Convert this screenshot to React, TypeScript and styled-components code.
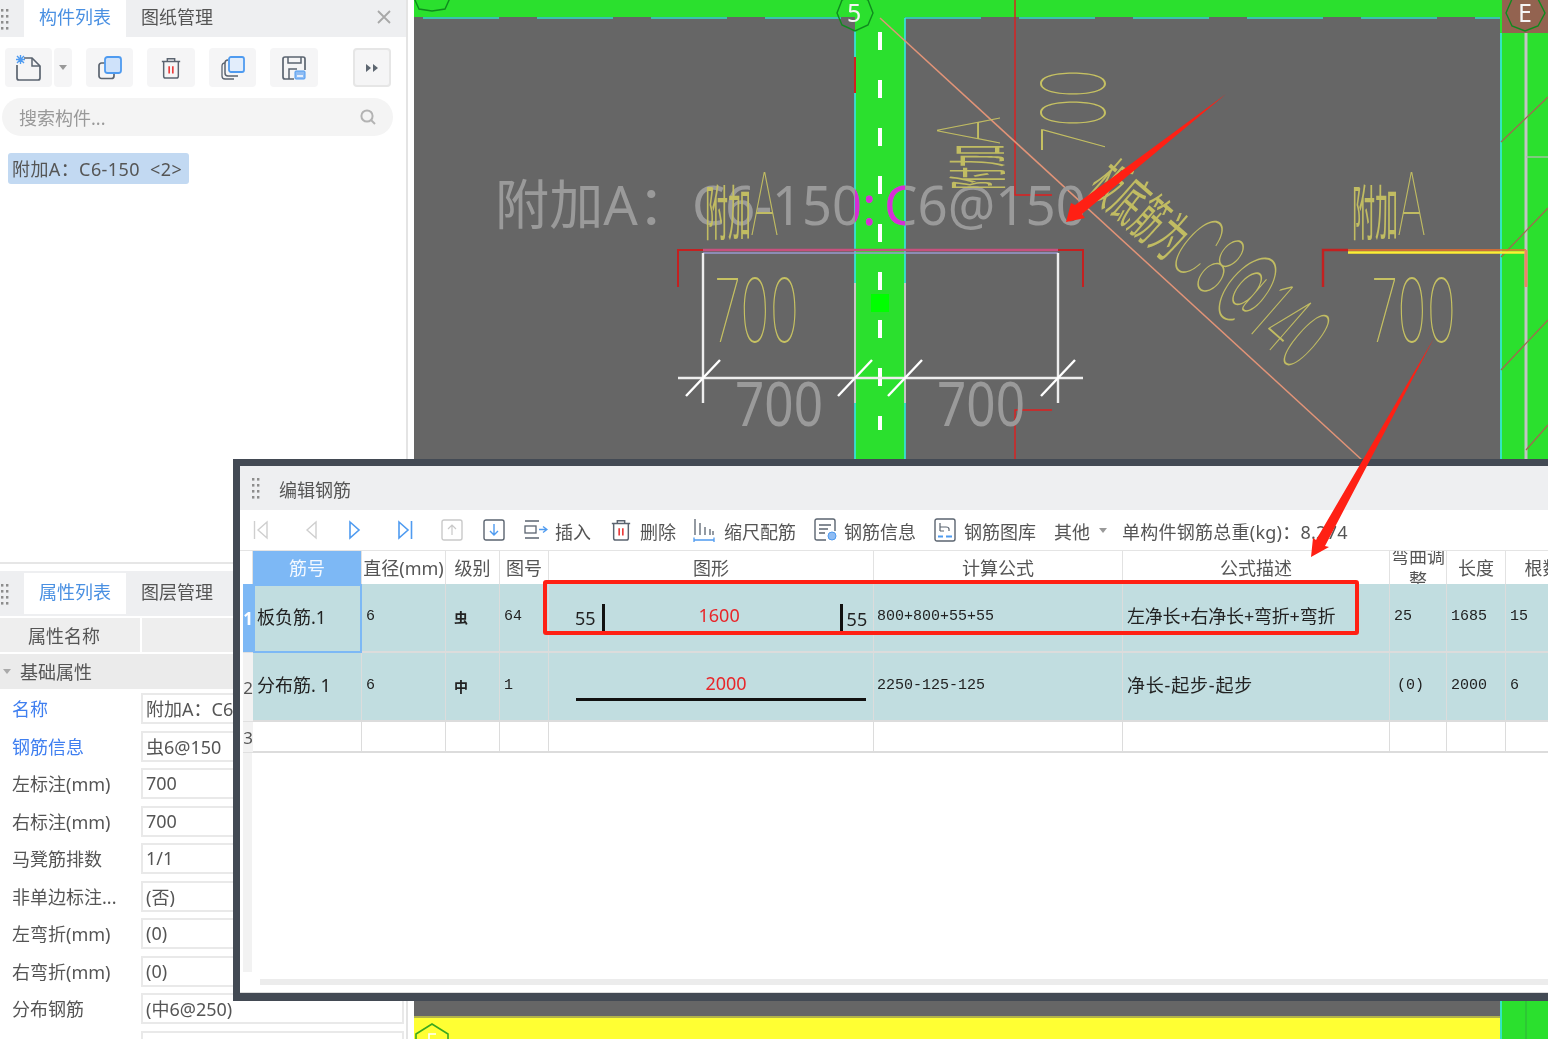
import React from "react";
import styled, { createGlobalStyle } from "styled-components";

const SANS = '"Noto Sans", "Noto Sans CJK SC", "Liberation Sans", sans-serif';
const MONO = '"Liberation Mono", "Noto Sans CJK SC", monospace';
const BLUE = "#4a90e2";
const INK = "#5b6470";
const ICON_BLUE = "#4f9bf0";

const Global = createGlobalStyle`
  html, body { margin: 0; padding: 0; background: #fff; overflow: hidden; }
  * { box-sizing: border-box; }
`;

const Page = styled.div`
  position: relative;
  display: flex;
  width: 1548px;
  height: 1039px;
  overflow: hidden;
  font-family: ${SANS};
  font-size: 18px;
  color: #555;
  filter: blur(0.45px);
`;

/* ---------- sidebar ---------- */
const Sidebar = styled.aside`
  flex: 0 0 414px;
  height: 1039px;
  display: flex;
  flex-direction: column;
  background: #fff;
  padding-right: 6px;
`;
const SideInner = styled.div`
  flex: 1;
  display: flex;
  flex-direction: column;
  border-right: 2px solid #e4e4e4;
  overflow: hidden;
`;
const ListPanel = styled.section`
  flex: 0 0 564px;
  border-bottom: 2px solid #e6e6e6;
`;
const TabBar = styled.div<{ $height: number; $pad?: number }>`
  display: flex;
  align-items: stretch;
  height: ${(p) => p.$height}px;
  padding-top: ${(p) => p.$pad ?? 0}px;
  padding-bottom: ${(p) => p.$pad ?? 0}px;
  background: #eeeff1;
`;
const Grip = styled.span<{ $w?: number }>`
  flex: 0 0 ${(p) => p.$w ?? 24}px;
  display: flex;
  align-items: center;
`;
const Tab = styled.div<{ $active?: boolean }>`
  flex: 0 0 102px;
  display: flex;
  align-items: center;
  justify-content: center;
  padding-bottom: 4px;
  line-height: 1;
  background: ${(p) => (p.$active ? "#fff" : "transparent")};
  color: ${(p) => (p.$active ? BLUE : "#555")};
`;
const CloseMark = styled.span`
  margin-left: auto;
  margin-right: 15px;
  padding-bottom: 3px;
  display: flex;
  align-items: center;
`;
const IconBar = styled.div`
  display: flex;
  align-items: center;
  height: 39px;
  margin: 11px 0 11px 5px;
`;
const IconBtn = styled.button<{ $w?: number; $gap?: number; $outlined?: boolean }>`
  flex: 0 0 ${(p) => p.$w ?? 47}px;
  height: 39px;
  margin-right: ${(p) => p.$gap ?? 14}px;
  padding: 0;
  display: flex;
  align-items: center;
  justify-content: center;
  background: #f5f5f6;
  border: ${(p) => (p.$outlined ? "2px solid #e6e6e6" : "none")};
  border-radius: 4px;
`;
const SearchBox = styled.div`
  display: flex;
  align-items: center;
  justify-content: space-between;
  height: 38px;
  margin: 0 13px 0 2px;
  padding: 0 17px;
  border-radius: 19px;
  background: #f4f4f4;
  color: #999;
  font-size: 18px;
`;
const ListItem = styled.div`
  display: inline-flex;
  align-items: center;
  height: 31px;
  margin: 17px 0 0 8px;
  padding: 0 7px 2px 4px;
  border-radius: 3px;
  background: #c2d9f2;
  font-size: 18px;
  letter-spacing: 0.4px;
  color: #555;
  white-space: pre;
`;
const PropPanel = styled.section`
  flex: 1;
  padding-top: 7px;
  overflow: hidden;
`;
const PropHead = styled.div`
  display: grid;
  grid-template-columns: 140px 1fr;
  gap: 2px;
  height: 34px;
  margin-top: 2px;
`;
const PropHeadCell = styled.div`
  display: flex;
  align-items: center;
  padding-left: 28px;
  padding-bottom: 1px;
  background: #eeeeee;
`;
const GroupRow = styled.div`
  display: flex;
  align-items: center;
  gap: 9px;
  height: 35px;
  margin: 2px 0 1px;
  padding: 0 0 1px 3px;
  background: #ebebeb;
`;
const PropRow = styled.div`
  display: grid;
  grid-template-columns: 141px 263px;
  align-items: center;
  height: 37.5px;
`;
const PropName = styled.div<{ $link?: boolean }>`
  padding-left: 12px;
  padding-bottom: 1px;
  color: ${(p) => (p.$link ? "#3f7ff0" : "#555")};
  white-space: nowrap;
`;
const PropValue = styled.div`
  height: 31px;
  display: flex;
  align-items: center;
  padding: 0 0 1px 3px;
  border: 2px solid #e9e9e9;
  white-space: nowrap;
`;

/* ---------- canvas ---------- */
const Canvas = styled.main`
  flex: 0 0 1134px;
  height: 1039px;
  background: #666666;
`;
const Drawing = styled.svg`
  display: block;
`;
const CadText = styled.text<{ $size: number; $color: string; $thin?: boolean }>`
  font-family: ${(p) => (p.$thin ? 'Inter, "Noto Sans CJK SC", sans-serif' : SANS)};
  font-size: ${(p) => p.$size}px;
  font-weight: ${(p) => (p.$thin ? 100 : 400)};
  fill: ${(p) => p.$color};
`;

/* ---------- dialog ---------- */
const Dialog = styled.section`
  position: absolute;
  left: 233px;
  top: 459px;
  width: 1330px;
  height: 542px;
  display: flex;
  flex-direction: column;
  border: 7px solid #434a54;
  border-bottom-width: 8px;
  background: #fff;
  z-index: 2;
`;
const DialogTitle = styled.header`
  flex: 0 0 44px;
  display: flex;
  align-items: center;
  padding-left: 11px;
  background: #eeeff1;
`;
const DialogTitleText = styled.span`
  margin-left: 19px;
  padding-top: 3px;
  line-height: 1;
`;
const RebarBar = styled.div`
  flex: 0 0 41px;
  display: flex;
  align-items: center;
  border-bottom: 1px solid #e4e4e4;
  white-space: nowrap;
`;
const BarSlot = styled.span<{ $x: number; $w: number }>`
  flex: 0 0 ${(p) => p.$w}px;
  margin-left: ${(p) => p.$x}px;
  display: flex;
  align-items: center;
  justify-content: center;
`;
const BarLabel = styled.span<{ $x: number; $track?: number }>`
  margin-left: ${(p) => p.$x}px;
  padding-top: 3px;
  line-height: 1;
  letter-spacing: ${(p) => p.$track ?? 0}px;
`;
const GridTable = styled.div`
  display: grid;
  grid-template-columns: 10px 109px 84px 54px 49px 325px 249px 267px 57px 59px 74px;
  grid-template-rows: 33px 69px 69px 31px;
  margin-left: 3px;
`;
const Head = styled.div<{ $selected?: boolean; $wrap?: boolean }>`
  display: flex;
  align-items: center;
  justify-content: center;
  overflow: hidden;
  line-height: ${(p) => (p.$wrap ? "24px" : "1")};
  text-align: center;
  background: ${(p) => (p.$selected ? "#7db8f5" : "#fff")};
  color: ${(p) => (p.$selected ? "#f4f9ff" : "#555")};
  border-right: 1px solid #e2e2e2;
`;
const Gutter = styled.div<{ $active?: boolean; $plain?: boolean }>`
  display: flex;
  align-items: center;
  justify-content: center;
  overflow: hidden;
  font-size: 17px;
  font-weight: ${(p) => (p.$active ? 700 : 400)};
  background: ${(p) => (p.$active ? "#7db8f5" : p.$plain ? "#fff" : "#f2f2f2")};
  color: ${(p) => (p.$active ? "#fff" : "#555")};
  border-bottom: 1px solid #e0e0e0;
`;
const Cell = styled.div<{ $filled?: boolean; $selected?: boolean; $pad?: number; $cjk?: boolean; $track?: number }>`
  display: flex;
  align-items: center;
  padding-left: ${(p) => p.$pad ?? 4}px;
  padding-bottom: ${(p) => (p.$cjk ? 5 : 2)}px;
  overflow: hidden;
  white-space: pre;
  color: #222;
  background: ${(p) => (p.$filled ? "#c1dde0" : "#fff")};
  font-family: ${(p) => (p.$cjk ? SANS : MONO)};
  font-size: ${(p) => (p.$cjk ? 18 : 15)}px;
  letter-spacing: ${(p) => p.$track ?? 0}px;
  border-right: 1px solid #dcdcdc;
  border-bottom: 2px solid #dcdcdc;
  ${(p) => p.$selected && "border: 2px solid #7db8f5;"}
`;
const GradeCell = styled(Cell)`
  padding-left: 8px;
  padding-bottom: 2px;
  font-size: 14px;
  font-weight: 700;
`;
const ShapeCell = styled(Cell)`
  padding-bottom: 0;
  font-family: ${SANS};
  font-size: 18px;
`;
const DimLabel = styled.span<{ $shift?: number }>`
  font-size: 18px;
  line-height: 1;
  margin-top: ${(p) => p.$shift ?? 0}px;
`;
const BentBar = styled.div`
  flex: 0 0 241px;
  height: 28px;
  margin: 0 4px 0 6px;
  display: flex;
  align-items: center;
  justify-content: center;
  border-left: 3px solid #111;
  border-right: 3px solid #111;
  border-bottom: 1px solid #333;
  color: #e8262a;
  padding-bottom: 5px;
  padding-right: 6px;
`;
const StraightBar = styled.div`
  flex: 0 0 290px;
  height: 30px;
  margin-bottom: 2px;
  padding-left: 10px;
  display: flex;
  align-items: flex-start;
  justify-content: center;
  line-height: 25px;
  border-bottom: 3px solid #111;
  color: #e8262a;
`;
const GutterFill = styled.div`
  width: 9px;
  height: 220px;
  margin-left: 3px;
  background: #f2f2f2;
`;
const HScroll = styled.div`
  height: 6px;
  margin: 7px 0 0 20px;
  background: #ececec;
`;
const DialogFoot = styled.div`
  flex: 1;
  margin-top: 7px;
  border-bottom: 1px solid #dcdcdc;
`;

/* ---------- annotation overlay ---------- */
const RedBox = styled.div`
  position: absolute;
  left: 543px;
  top: 580px;
  width: 816px;
  height: 55px;
  border: 4px solid #ff2014;
  border-radius: 3px;
  z-index: 3;
`;
const Annotations = styled.svg`
  position: absolute;
  left: 0;
  top: 0;
  z-index: 4;
  pointer-events: none;
`;

/* ---------- icons ---------- */
const Dots = () => (
  <svg width="9" height="24" viewBox="0 0 9 24">
    {[2, 8, 14, 20].map((y) =>
      [1, 6].map((dx) => <rect key={`${y}${dx}`} x={dx} y={y} width="2.4" height="2.6" fill="#8d8d8d" />)
    )}
  </svg>
);
const CloseIcon = () => (
  <svg width="14" height="14" viewBox="0 0 14 14">
    <path d="M1 1 L13 13 M13 1 L1 13" stroke="#a8a8a8" strokeWidth="1.8" fill="none" />
  </svg>
);
const Caret = ({ color = "#999" }: { color?: string }) => (
  <svg width="8" height="5" viewBox="0 0 8 5">
    <path d="M0 0 H8 L4 5 Z" fill={color} />
  </svg>
);
const NewDocIcon = () => (
  <svg width="26" height="26" viewBox="0 0 26 26">
    <path d="M8 3 H16 L24 11 V23 Q24 25 22 25 H3 Q1 25 1 23 V10" fill="none" stroke={INK} strokeWidth="1.7" />
    <path d="M16 3 V11 H24" fill="none" stroke={INK} strokeWidth="1.5" />
    <path d="M1 1 L8 8 M8 1 L1 8 M4.5 0 V9 M0 4.5 H9" stroke={ICON_BLUE} strokeWidth="1.4" />
  </svg>
);
const CopyIcon = () => (
  <svg width="24" height="24" viewBox="0 0 24 24">
    <rect x="1" y="7" width="15" height="15.5" rx="2.5" fill="none" stroke={INK} strokeWidth="1.7" />
    <rect x="7" y="1" width="16" height="16" rx="2.5" fill="#cfe2fa" stroke={ICON_BLUE} strokeWidth="1.8" />
  </svg>
);
const TrashIcon = ({ size = 22 }: { size?: number }) => (
  <svg width={size} height={size} viewBox="0 0 22 24">
    <path d="M1 5 H21 M7 5 V2 H15 V5 M3 5 V21 Q3 23 5 23 H17 Q19 23 19 21 V5" fill="none" stroke={INK} strokeWidth="1.6" />
    <path d="M9 10 V18 M13 10 V18" stroke="#ea3b3b" strokeWidth="1.8" />
  </svg>
);
const MultiCopyIcon = () => (
  <svg width="24" height="24" viewBox="0 0 24 24">
    <path d="M4 7 Q1 7 1 10 V20 Q1 23 4 23 H13" fill="none" stroke={INK} strokeWidth="1.3" />
    <path d="M7 4 Q4 4 4 7 V17 Q4 20 7 20 H17" fill="none" stroke={INK} strokeWidth="1.5" />
    <rect x="8" y="1" width="15" height="15" rx="2" fill="#e2edfb" stroke={ICON_BLUE} strokeWidth="1.8" />
  </svg>
);
const SaveIcon = () => (
  <svg width="24" height="24" viewBox="0 0 24 24">
    <path d="M12 23 H3 Q1 23 1 21 V3 Q1 1 3 1 H21 Q23 1 23 3 V14" fill="none" stroke={INK} strokeWidth="1.7" />
    <path d="M7 23 V13 H15 M6 1 V7 H19 V1" fill="none" stroke={INK} strokeWidth="1.5" />
    <rect x="13" y="15" width="10" height="8" rx="1" fill="#8fbcf3" stroke={ICON_BLUE} />
    <path d="M15 20 H21" stroke="#fff" strokeWidth="1.5" />
  </svg>
);
const ForwardIcon = () => (
  <svg width="12" height="8" viewBox="0 0 12 8">
    <path d="M0 0 L5 4 L0 8 Z M7 0 L12 4 L7 8 Z" fill="#5d6670" />
  </svg>
);
const SearchIcon = () => (
  <svg width="16" height="16" viewBox="0 0 16 16">
    <circle cx="7" cy="7" r="5.6" fill="none" stroke="#b3b3b3" strokeWidth="2" />
    <path d="M11 11 L15 15" stroke="#b3b3b3" strokeWidth="2" />
  </svg>
);
const StepIcon = ({ dir, bar, color }: { dir: "l" | "r"; bar?: boolean; color: string }) => (
  <svg width="16" height="20" viewBox="0 0 16 20">
    {dir === "l" ? (
      <>
        {bar && <path d="M1.5 1 V19" stroke={color} strokeWidth="1.4" />}
        <path d="M14 2 L5 10 L14 18 Z" fill="none" stroke={color} strokeWidth="1.4" />
      </>
    ) : (
      <>
        <path d="M2 2 L11 10 L2 18 Z" fill="none" stroke={color} strokeWidth="1.6" />
        {bar && <path d="M14.5 1 V19" stroke={color} strokeWidth="1.6" />}
      </>
    )}
  </svg>
);
const BoxArrow = ({ up }: { up?: boolean }) => (
  <svg width="22" height="22" viewBox="0 0 22 22">
    <rect x="1" y="1" width="20" height="20" rx="2" fill="none" stroke={up ? "#c9c9c9" : INK} strokeWidth="1.4" />
    {up ? (
      <path d="M11 16 V6 M7 10 L11 6 L15 10" fill="none" stroke="#c9c9c9" strokeWidth="1.2" />
    ) : (
      <path d="M11 5 V16 M7 12 L11 16 L15 12" fill="none" stroke={ICON_BLUE} strokeWidth="1.4" />
    )}
  </svg>
);
const InsertIcon = () => (
  <svg width="24" height="20" viewBox="0 0 24 20">
    <path d="M1 1 H15 M1 18 H15" stroke={INK} strokeWidth="1.4" />
    <rect x="1" y="6" width="11" height="7" fill="none" stroke={INK} strokeWidth="1.3" />
    <path d="M15 9.5 H22 M19 6.5 L23 9.5 L19 12.5" fill="none" stroke={ICON_BLUE} strokeWidth="1.4" />
  </svg>
);
const ScaleIcon = () => (
  <svg width="22" height="24" viewBox="0 0 22 24">
    <path d="M2 1 V17 M7 5 V17 M12 9 V17 M17 11 V17 M20 13 V17" stroke={INK} strokeWidth="1.3" />
    <path d="M1 22 H21 M1 19.5 V24 M21 19.5 V24" stroke={ICON_BLUE} strokeWidth="1.3" fill="none" />
  </svg>
);
const InfoIcon = () => (
  <svg width="24" height="24" viewBox="0 0 24 24">
    <path d="M12 22 H3 Q1 22 1 20 V3 Q1 1 3 1 H19 Q21 1 21 3 V13" fill="none" stroke={INK} strokeWidth="1.4" />
    <path d="M5 7 H17 M5 11 H14 M5 15 H11" stroke={INK} strokeWidth="1.3" />
    <circle cx="18" cy="18" r="4" fill="#8fbcf3" stroke={ICON_BLUE} />
  </svg>
);
const LibraryIcon = () => (
  <svg width="22" height="24" viewBox="0 0 22 24">
    <rect x="1" y="1" width="20" height="22" rx="2" fill="none" stroke={INK} strokeWidth="1.4" />
    <path d="M6 5 V13 M6 9 H12 Q15 9 15 11 V13 M6 13 H10" fill="none" stroke={INK} strokeWidth="1.2" />
    <path d="M4 18.5 H9 M12 18.5 H18" stroke={ICON_BLUE} strokeWidth="2" />
  </svg>
);

/* ---------- data ---------- */
const props: { name: string; value: string; link?: boolean }[] = [
  { name: "名称", value: "附加A：C6-150", link: true },
  { name: "钢筋信息", value: "虫6@150", link: true },
  { name: "左标注(mm)", value: "700" },
  { name: "右标注(mm)", value: "700" },
  { name: "马凳筋排数", value: "1/1" },
  { name: "非单边标注...", value: "(否)" },
  { name: "左弯折(mm)", value: "(0)" },
  { name: "右弯折(mm)", value: "(0)" },
  { name: "分布钢筋", value: "(中6@250)" },
  { name: "", value: "" },
];
const heads = ["筋号", "直径(mm)", "级别", "图号", "图形", "计算公式", "公式描述", "弯曲调整", "长度", "根数"];

/* ---------- canvas drawing ---------- */
const band = { x: 855, w: 50 };
const GREEN = "#2be02e";
const YELLOW = "#c6c162";
const GREY = "#9a9a9a";
const RED = "#e01f1f";

const CadLabel = ({ x = 0, y = 0, transform }: { x?: number; y?: number; transform?: string }) => (
  <g transform={transform ?? `translate(${x} ${y})`} opacity="0.95">
    <CadText $size={60} $color={YELLOW} x={0} y={0} textLength={46} lengthAdjust="spacingAndGlyphs">附加</CadText>
    <CadText $thin $size={86} $color={YELLOW} x={45} y={0} textLength={29} lengthAdjust="spacingAndGlyphs">A</CadText>
  </g>
);

const CadDrawing = () => {
  const label = (color: string) => (
    <>
      <CadText $size={54} $color={color} x={495} y={225} textLength={197} lengthAdjust="spacingAndGlyphs">附加A：</CadText>
      <CadText $size={54} $color={color} x={692} y={225} textLength={170} lengthAdjust="spacingAndGlyphs">C6-150</CadText>
      <CadText $size={54} $color={color} x={862} y={225}>:</CadText>
      <CadText $size={54} $color={color} x={884} y={225} textLength={202} lengthAdjust="spacingAndGlyphs">C6@150</CadText>
    </>
  );
  const tick = (x: number) => <path d={`M${x - 17} 396 L${x + 17} 360`} stroke="#fff" strokeWidth="2.4" />;
  return (
    <Drawing width="1134" height="1039" viewBox="414 0 1134 1039">
      <defs>
        <clipPath id="bandClip">
          <rect x={band.x} y="0" width={band.w} height="460" />
        </clipPath>
      </defs>
      <rect x="414" y="0" width="1134" height="17" fill={GREEN} />
      <rect x={band.x} y="0" width={band.w} height="460" fill={GREEN} />
      <rect x="1500" y="0" width="48" height="1039" fill={GREEN} />
      <rect x="1502" y="0" width="46" height="33" fill="#936350" />
      <rect x="414" y="1017" width="1086" height="22" fill="#ffff33" />
      <rect x="414" y="1016" width="1086" height="2" fill="#b3b34a" />
      <path d="M423 18 H855 M905 18 H1500" stroke="#2ce0c8" strokeWidth="1.6" strokeDasharray="76 38" />
      <path d="M855 30 V460 M905 18 V460 M1501 33 V1039" stroke="#36e6e6" strokeWidth="1.6" />
      <path d="M1526 33 V460" stroke="#c4c4c4" strokeWidth="3" />
      <path d="M1526 990 V1039" stroke="#2fb83a" strokeWidth="1.2" />
      <path d="M1526 157 H1548" stroke="#b9b9b9" strokeWidth="1.2" />
      <path d="M1501 142 L1548 97 M1501 257 L1548 208 M1501 370 L1548 320 M1526 450 L1548 425" stroke="#a06a50" strokeWidth="1.3" />
      <path d="M880 32 V430" stroke="#fff" strokeWidth="4" strokeDasharray="18 30" />
      <rect x="871" y="294" width="18" height="18" fill="#00ff00" />
      <path d="M855 57 V93" stroke="#d02020" strokeWidth="2" />
      <path d="M1015 0 V195 H1052 M1015 460 V410 H1052" fill="none" stroke={RED} strokeWidth="1.4" />
      <path d="M880 18 L1362 460" stroke="#e29478" strokeWidth="1.5" />

      {label(GREY)}
      <g clipPath="url(#bandClip)">{label("#d62ed6")}</g>

      <path d="M678 287 V250 H703 M1058 250 H1083 V287" fill="none" stroke="#c42020" strokeWidth="2" />
      <path d="M703 250 H1058" stroke="#c8507e" strokeWidth="2.5" />
      <path d="M703 253 H1058" stroke="#9a9ad2" strokeWidth="1.6" />
      <path d="M1323 287 V250 H1348" fill="none" stroke="#c42020" strokeWidth="2.4" />
      <path d="M1348 250 H1526" stroke="#f0702a" strokeWidth="1.5" />
      <path d="M1348 252.5 H1526" stroke="#ffee33" strokeWidth="2.4" />
      <path d="M1526 250 V287" stroke="#f0806a" strokeWidth="3" />

      <path d="M703 253 V403 M1058 253 V403" stroke="#eeeeee" strokeWidth="2.4" />
      <path d="M855 283 V403 M905 283 V403" stroke="#c8c8c8" strokeWidth="2" />
      <path d="M678 378 H1083" stroke="#eeeeee" strokeWidth="2.4" />
      {tick(703)}
      {tick(855)}
      {tick(905)}
      {tick(1058)}

      <CadText $size={62} $color={GREY} x={735} y={426} textLength={88} lengthAdjust="spacingAndGlyphs">700</CadText>
      <CadText $size={62} $color={GREY} x={937} y={426} textLength={88} lengthAdjust="spacingAndGlyphs">700</CadText>

      <CadText $thin $size={88} $color={YELLOW} x={714} y={342} textLength={85} lengthAdjust="spacingAndGlyphs">700</CadText>
      <CadText $thin $size={88} $color={YELLOW} x={1371} y={342} textLength={85} lengthAdjust="spacingAndGlyphs">700</CadText>
      <CadText $thin $size={88} $color={YELLOW} textLength={84} lengthAdjust="spacingAndGlyphs" transform="translate(1105 153) rotate(-90)">700</CadText>

      <CadLabel x={705} y={235} />
      <CadLabel x={1352} y={235} />
      <CadLabel transform="translate(1000 190) rotate(-90)" />
      <g transform="translate(1086 190) rotate(41)" opacity="0.95">
        <CadText $size={56} $color={YELLOW} x={0} y={0} textLength={108} lengthAdjust="spacingAndGlyphs">板底筋为</CadText>
        <CadText $thin $size={86} $color={YELLOW} x={106} y={0} textLength={172} lengthAdjust="spacingAndGlyphs">C8@140</CadText>
      </g>

      <polygon points="855,-6 868,0 873,13 868,25 855,31 842,25 837,13 842,0" fill="none" stroke="#0f8a1e" strokeWidth="1.4" />
      <CadText $size={25} $color="#f4f4f4" x={847} y={22}>5</CadText>
      <polygon points="432,-19 445,-13 450,-2 445,9 432,11 419,9 414,-2 419,-13" fill="none" stroke="#0f8a1e" strokeWidth="1.4" />
      <polygon points="1525,-7 1538,-1 1545,13 1538,26 1525,31 1512,26 1506,13 1512,-1" fill="none" stroke="#0f8a1e" strokeWidth="1.4" />
      <CadText $size={25} $color="#f4f4f4" x={1518} y={22}>E</CadText>
      <path d="M416 1039 V1034 L432 1024 L448 1034 V1039" fill="none" stroke="#3aa81e" strokeWidth="1.6" />
      <path d="M429 1039 V1034 H436" fill="none" stroke="#fff" strokeWidth="1.6" />
    </Drawing>
  );
};

export default function App() {
  return (
    <Page>
      <Global />
      <Sidebar>
        <SideInner>
          <ListPanel>
            <TabBar $height={37}>
              <Grip><Dots /></Grip>
              <Tab $active>构件列表</Tab>
              <Tab>图纸管理</Tab>
              <CloseMark><CloseIcon /></CloseMark>
            </TabBar>
            <IconBar>
              <IconBtn $w={47} $gap={2}><NewDocIcon /></IconBtn>
              <IconBtn $w={18}><Caret /></IconBtn>
              <IconBtn><CopyIcon /></IconBtn>
              <IconBtn $w={48}><TrashIcon /></IconBtn>
              <IconBtn><MultiCopyIcon /></IconBtn>
              <IconBtn $w={48} $gap={35}><SaveIcon /></IconBtn>
              <IconBtn $w={38} $gap={0} $outlined><ForwardIcon /></IconBtn>
            </IconBar>
            <SearchBox>
              <span>搜索构件...</span>
              <SearchIcon />
            </SearchBox>
            <ListItem>附加A：C6-150  &lt;2&gt;</ListItem>
          </ListPanel>
          <PropPanel>
            <TabBar $height={45} $pad={2}>
              <Grip><Dots /></Grip>
              <Tab $active>属性列表</Tab>
              <Tab>图层管理</Tab>
            </TabBar>
            <PropHead>
              <PropHeadCell>属性名称</PropHeadCell>
              <PropHeadCell />
            </PropHead>
            <GroupRow>
              <Caret color="#aaa" />
              <span>基础属性</span>
            </GroupRow>
            {props.map((r, i) => (
              <PropRow key={i}>
                <PropName $link={r.link}>{r.name}</PropName>
                <PropValue>{r.value}</PropValue>
              </PropRow>
            ))}
          </PropPanel>
        </SideInner>
      </Sidebar>

      <Canvas>
        <CadDrawing />
      </Canvas>

      <Dialog>
        <DialogTitle>
          <Dots />
          <DialogTitleText>编辑钢筋</DialogTitleText>
        </DialogTitle>
        <RebarBar>
          <BarSlot $x={13} $w={16}><StepIcon dir="l" bar color="#cfcfcf" /></BarSlot>
          <BarSlot $x={33} $w={16}><StepIcon dir="l" color="#cfcfcf" /></BarSlot>
          <BarSlot $x={30} $w={16}><StepIcon dir="r" color={ICON_BLUE} /></BarSlot>
          <BarSlot $x={33} $w={16}><StepIcon dir="r" bar color={ICON_BLUE} /></BarSlot>
          <BarSlot $x={28} $w={22}><BoxArrow up /></BarSlot>
          <BarSlot $x={20} $w={22}><BoxArrow /></BarSlot>
          <BarSlot $x={19} $w={24}><InsertIcon /></BarSlot>
          <BarLabel $x={7}>插入</BarLabel>
          <BarSlot $x={19} $w={22}><TrashIcon /></BarSlot>
          <BarLabel $x={8}>删除</BarLabel>
          <BarSlot $x={17} $w={22}><ScaleIcon /></BarSlot>
          <BarLabel $x={9}>缩尺配筋</BarLabel>
          <BarSlot $x={18} $w={24}><InfoIcon /></BarSlot>
          <BarLabel $x={6}>钢筋信息</BarLabel>
          <BarSlot $x={18} $w={22}><LibraryIcon /></BarSlot>
          <BarLabel $x={8}>钢筋图库</BarLabel>
          <BarLabel $x={18}>其他</BarLabel>
          <BarSlot $x={9} $w={8}><Caret /></BarSlot>
          <BarLabel $x={15} $track={0.25}>单构件钢筋总重(kg)：8.274</BarLabel>
        </RebarBar>
        <GridTable>
          <Head />
          {heads.map((h, i) => (
            <Head key={h} $selected={i === 0} $wrap={h === "弯曲调整"}>{h}</Head>
          ))}

          <Gutter $active>1</Gutter>
          <Cell $filled $selected $cjk $pad={2}>板负筋.1</Cell>
          <Cell $filled>6</Cell>
          <GradeCell $filled $cjk>虫</GradeCell>
          <Cell $filled>64</Cell>
          <ShapeCell $filled $pad={26}>
            <DimLabel>55</DimLabel>
            <BentBar>1600</BentBar>
            <DimLabel $shift={3}>55</DimLabel>
          </ShapeCell>
          <Cell $filled $pad={3}>800+800+55+55</Cell>
          <Cell $filled $cjk $track={-0.2}>左净长+右净长+弯折+弯折</Cell>
          <Cell $filled>25</Cell>
          <Cell $filled>1685</Cell>
          <Cell $filled>15</Cell>

          <Gutter>2</Gutter>
          <Cell $filled $cjk>分布筋. 1</Cell>
          <Cell $filled>6</Cell>
          <GradeCell $filled $cjk>中</GradeCell>
          <Cell $filled>1</Cell>
          <ShapeCell $filled $pad={27}>
            <StraightBar>2000</StraightBar>
          </ShapeCell>
          <Cell $filled $pad={3}>2250-125-125</Cell>
          <Cell $filled $cjk $track={0.8}>净长-起步-起步</Cell>
          <Cell $filled $pad={7}>(0)</Cell>
          <Cell $filled>2000</Cell>
          <Cell $filled>6</Cell>

          <Gutter>3</Gutter>
          <Cell />
          <Cell />
          <Cell />
          <Cell />
          <Cell />
          <Cell />
          <Cell />
          <Cell />
          <Cell />
          <Cell />
        </GridTable>
        <GutterFill />
        <HScroll />
        <DialogFoot />
      </Dialog>

      <RedBox />
      <Annotations width="1548" height="1039" viewBox="0 0 1548 1039">
        <polygon points="1226,94 1075,205 1071,203 1066,222 1085,218 1082,214" fill="#ff2014" />
        <polygon points="1434,338 1325,546 1329,547 1311,557 1313,538 1316,540" fill="#ff2014" />
      </Annotations>
    </Page>
  );
}
